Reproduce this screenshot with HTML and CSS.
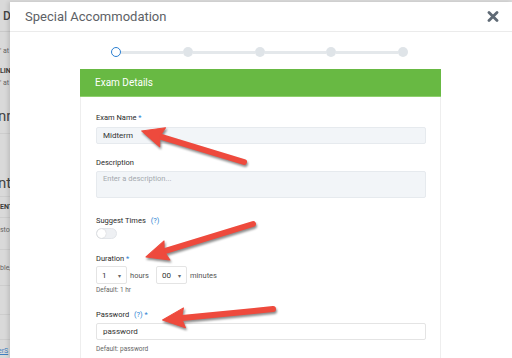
FILE: index.html
```html
<!DOCTYPE html>
<html lang="en">
<head>
  <meta charset="UTF-8" />
  <meta name="viewport" content="width=device-width, initial-scale=1.0"/>
  <title>Special Accommodation</title>
  <link rel="stylesheet" href="styles.css">
</head>
<body>
  <div class="screen">
    <!-- page behind the modal, only a sliver shows -->
    <div class="behind">
      <div class="b-row b-top"><span class="b-title">De</span></div>
      <div class="b-row b-small r-at1">' at</div>
      <div class="b-row b-bold r-lin">LIN</div>
      <div class="b-row b-small r-at2">' at</div>
      <div class="b-row b-big r-nm">nm</div>
      <div class="b-row b-line r-sep"></div>
      <div class="b-row b-big b-line r-nt">nt</div>
      <div class="b-row b-bold b-line r-ent">ENT</div>
      <div class="b-row b-small b-line r-stor">stor</div>
      <div class="b-row b-small b-line r-ble">ble,</div>
      <div class="b-row b-line r-e1"></div>
      <div class="b-row b-line r-e2"></div>
      <div class="b-row b-link">erS</div>
    </div>

    <div class="modal">
      <div class="modal-header">
        <h2>Special Accommodation</h2>
        <button class="close" aria-label="Close">
          <svg width="12" height="11" viewBox="0 0 12 11">
            <path d="M2 1.5 L10 9.5 M10 1.5 L2 9.5" stroke="#5f6a75" stroke-width="2.8" stroke-linecap="round"/>
          </svg>
        </button>
      </div>

      <div class="modal-body">
        <div class="stepper">
          <span class="dot active"></span><span class="seg"></span>
          <span class="dot"></span><span class="seg"></span>
          <span class="dot"></span><span class="seg"></span>
          <span class="dot"></span><span class="seg"></span>
          <span class="dot"></span>
        </div>

        <div class="panel">
          <div class="panel-heading">Exam Details</div>
          <div class="panel-body">
            <div class="field">
              <label>Exam Name <span class="req">*</span></label>
              <div class="input filled">Midterm</div>
            </div>

            <div class="field f-desc">
              <label>Description</label>
              <div class="input textarea">Enter a description...</div>
            </div>

            <div class="field f-suggest">
              <label>Suggest Times <span class="help">(?)</span></label>
              <div class="toggle"><span class="knob"></span></div>
            </div>

            <div class="field f-duration">
              <label>Duration <span class="req">*</span></label>
              <div class="duration">
                <div class="select">1 <span class="caret">&#9662;</span></div>
                <span class="unit">hours</span>
                <div class="select">00 <span class="caret">&#9662;</span></div>
                <span class="unit">minutes</span>
              </div>
              <div class="hint">Default: 1 hr</div>
            </div>

            <div class="field f-password">
              <label>Password <span class="help">(?)</span> <span class="req">*</span></label>
              <div class="input plain">password</div>
              <div class="hint">Default: password</div>
            </div>
          </div>
        </div>
      </div>
    </div>

    <!-- red annotation arrows drawn over the screenshot -->
    <svg class="arrows" width="512" height="358" viewBox="0 0 512 358">
      <g fill="#ee4a3d" stroke="#ee4a3d">
        <g transform="translate(244 162) rotate(196.9)">
          <line x1="0" y1="0" x2="90" y2="0" stroke-width="6" stroke-linecap="round"/>
          <polygon points="85,-10 107,0 85,10 88,0" stroke-width="1" stroke-linejoin="round"/>
        </g>
        <g transform="translate(253 224) rotate(162.9)">
          <line x1="0" y1="0" x2="95" y2="0" stroke-width="6" stroke-linecap="round"/>
          <polygon points="90,-10 112,0 90,10 93,0" stroke-width="1" stroke-linejoin="round"/>
        </g>
        <g transform="translate(273 309) rotate(174.3)">
          <line x1="0" y1="0" x2="94" y2="0" stroke-width="6" stroke-linecap="round"/>
          <polygon points="89,-10 111,0 89,10 92,0" stroke-width="1" stroke-linejoin="round"/>
        </g>
      </g>
    </svg>
  </div>
</body>
</html>
```

FILE: styles.css
```css
* {
  box-sizing: border-box;
}

body {
  margin: 0;
  padding: 0;
  font-family: Roboto, "Liberation Sans", sans-serif;
  background: #dadada;
}

.screen {
  display: flex;
  width: 512px;
  height: 358px;
  overflow: hidden;
  position: relative;
}

/* sliver of the page under the modal */
.behind {
  width: 10px;
  flex: none;
  overflow: hidden;
  background: #d9d9d9;
  color: #555;
  white-space: nowrap;
}

.b-row {
  display: flex;
  align-items: center;
  overflow: hidden;
}

.b-top {
  height: 32px;
  border-bottom: 1px solid #c9c9c9;
  padding-left: 3px;
}

.b-title {
  font-size: 12px;
  font-weight: 500;
  color: #444;
}

.b-small {
  font-size: 7px;
  color: #666;
}

.b-bold {
  font-size: 7px;
  font-weight: 700;
  color: #3c3c3c;
}

.b-big {
  font-size: 15px;
  color: #444;
  margin-left: -2px;
}

.b-line {
  border-bottom: 1px solid #cdcdcd;
}

.r-at1 { height: 12px; margin-top: 13px; }
.r-lin { height: 12px; margin-top: 8px; }
.r-at2 { height: 12px; }
.r-nm { height: 22px; margin-top: 16px; }
.r-sep { height: 7px; }
.r-nt { height: 27px; margin-top: 36px; }
.r-ent { height: 21px; }
.r-stor { height: 32px; padding-bottom: 8px; }
.r-ble { height: 36px; }
.r-e1 { height: 29px; }
.r-e2 { height: 25px; }

.b-link {
  height: 22px;
  font-size: 7px;
  color: #3f7fc0;
  text-decoration: underline;
  margin-left: -2px;
}

/* modal */
.modal {
  flex: 1;
  margin-top: 2px;
  background: #fff;
  box-shadow: -2px 0 4px rgba(0, 0, 0, 0.12);
}

.modal-header {
  display: flex;
  align-items: center;
  justify-content: space-between;
  height: 30px;
  padding: 0 13px 0 15px;
  border-bottom: 1px solid #ebebeb;
}

.modal-header h2 {
  margin: 0;
  font-size: 13px;
  font-weight: 400;
  color: #5d6166;
}

.close {
  border: none;
  background: none;
  padding: 0;
  display: flex;
  cursor: pointer;
}

.modal-body {
  padding-left: 70px;
}

.stepper {
  display: flex;
  align-items: center;
  width: 297px;
  margin-left: 31px;
  padding: 15px 0 12px;
}

.dot {
  width: 10px;
  height: 10px;
  border-radius: 50%;
  background: #dfe4e8;
  flex: none;
}

.dot.active {
  background: #fff;
  border: 1.5px solid #2b7fd2;
}

.seg {
  flex: 1;
  height: 3px;
  background: #e4e8eb;
}

.panel {
  width: 361px;
  border-left: 1px solid #eeeeee;
  border-right: 1px solid #eeeeee;
  height: 300px;
}

.panel-heading {
  height: 28px;
  margin: 0 -1px;
  background: #68b943;
  border-bottom: 1px solid #8fd06e;
  color: #fff;
  font-size: 10px;
  display: flex;
  align-items: center;
  padding-left: 15px;
}

.panel-body {
  padding: 16px 15px 0;
}

.field {
  margin-bottom: 14px;
}

.field label {
  display: block;
  font-size: 7.5px;
  font-weight: 400;
  color: #2a2a2a;
  height: 10px;
  line-height: 10px;
  margin-bottom: 4px;
}

.req {
  color: #2b7fd2;
}

.help {
  color: #2b7fd2;
  margin-left: 3px;
}

.input {
  width: 330px;
  height: 17px;
  border: 1px solid #e6eaee;
  border-radius: 2px;
  background: #f2f5f8;
  font-size: 8px;
  color: #333;
  padding-left: 6px;
  display: flex;
  align-items: center;
}

.f-desc label {
  margin-bottom: 3px;
}

.input.textarea {
  height: 27px;
  align-items: flex-start;
  padding-top: 2px;
  line-height: 9px;
  color: #a4a9ae;
  font-size: 7.5px;
}

.input.plain {
  background: #fff;
  border-color: #e4e4e4;
}

.f-suggest {
  margin-top: 18px;
  margin-bottom: 15px;
}

.f-suggest label {
  margin-bottom: 2px;
}

.toggle {
  width: 21px;
  height: 11px;
  border-radius: 6px;
  background: #eef0f3;
  border: 1px solid #e2e5e9;
  display: flex;
  align-items: center;
}

.knob {
  width: 9px;
  height: 9px;
  border-radius: 50%;
  background: #fff;
  box-shadow: 0 0 1px rgba(0, 0, 0, 0.25);
}

.f-duration {
  margin-bottom: 16px;
}

.f-duration label {
  margin-bottom: 2px;
}

.duration {
  display: flex;
  align-items: center;
  font-size: 7.5px;
  color: #555;
}

.select {
  width: 31px;
  height: 18px;
  border: 1px solid #e4e4e4;
  border-radius: 2px;
  background: #fff;
  display: flex;
  align-items: center;
  justify-content: space-between;
  padding: 0 5px;
  font-size: 8px;
  color: #333;
}

.caret {
  font-size: 6px;
  color: #666;
}

.unit {
  margin: 0 7px 0 3px;
}

.hint {
  font-size: 6.5px;
  line-height: 8px;
  color: #666;
  margin-top: 2px;
}

.f-password label {
  margin-bottom: 3px;
}

.f-password .hint {
  margin-top: 5px;
}

.arrows {
  position: absolute;
  left: 0;
  top: 0;
  pointer-events: none;
  filter: drop-shadow(1px 2px 1px rgba(0, 0, 0, 0.45));
}
```
